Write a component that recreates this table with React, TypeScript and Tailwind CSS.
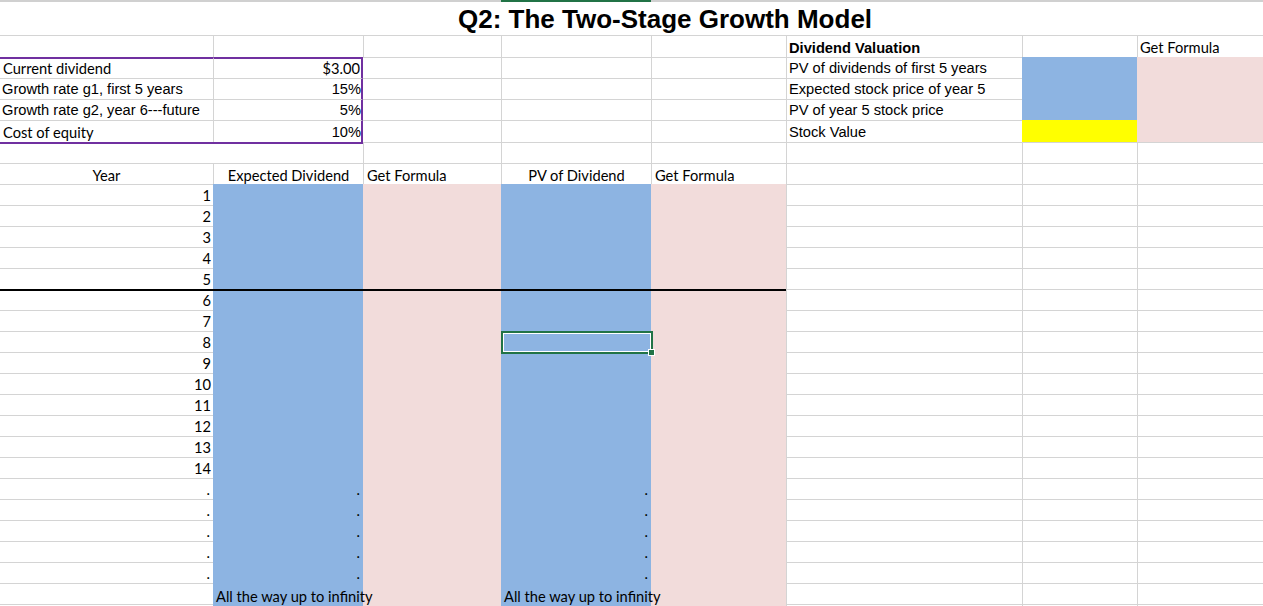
import React from "react";

const AR = "[font-family:'Liberation_Sans',Arial,sans-serif] text-[14.67px]";
const CA = "[font-family:Lato,'Open_Sans',sans-serif] text-[14.67px]";
const G = "border-l border-t border-[#d4d4d4]";
const GA = "border-t border-[#d4d4d4]";
const BLUE = "bg-[#8db4e2] border-l border-t border-[#8db4e2]";
const PINK = "bg-[#f2dcdb] border-l border-t border-[#f2dcdb]";

const WA = "w-[213px]";
const WB = "w-[150px]";
const WC = "w-[138px]";
const WD = "w-[150px]";
const WE = "w-[135px]";
const WF = "w-[236px]";
const WG = "w-[115px]";
const WH = "w-[126px]";

function Cell({
  w,
  c = "",
  children,
}: {
  w: string;
  c?: string;
  children?: React.ReactNode;
}) {
  return <div className={`${w} shrink-0 h-full flex items-end ${c}`}>{children}</div>;
}

function T({ f, c = "", children }: { f: string; c?: string; children: React.ReactNode }) {
  return (
    <span className={`${f} leading-[17px] whitespace-nowrap text-black ${c}`}>{children}</span>
  );
}

function Row({ h, children }: { h: string; children: React.ReactNode }) {
  return <div className={`flex ${h}`}>{children}</div>;
}

function RightCols() {
  return (
    <>
      <Cell w={WF} c={G} />
      <Cell w={WG} c={G} />
      <Cell w={WH} c={G} />
    </>
  );
}

export default function App() {
  const years = [1, 2, 3, 4, 5, 6, 7, 8, 9, 10, 11, 12, 13, 14];
  return (
    <div className="w-[1263px] h-[606px] overflow-hidden bg-white select-none">
      {/* column header remnant */}
      <div className="flex h-[2px]">
        <div className="w-[501px] bg-[#d0d0d0]" />
        <div className="w-[150px] bg-[#217346]" />
        <div className="w-[612px] bg-[#d0d0d0]" />
      </div>

      {/* title row */}
      <div className="h-[33px] pl-[458px] pt-[2px]">
        <span className="[font-family:'Liberation_Sans',Arial,sans-serif] text-[26px] font-bold leading-[30px] text-black whitespace-nowrap">
          Q2: The Two-Stage Growth Model
        </span>
      </div>

      {/* R2 */}
      <Row h="h-[22px]">
        <Cell w={WA} c={GA} />
        <Cell w={WB} c={G} />
        <Cell w={WC} c={G} />
        <Cell w={WD} c={G} />
        <Cell w={WE} c={G} />
        <Cell w={WF} c={G}>
          <T f={`${AR} font-bold`} c="pl-[2px] pb-[0px]">Dividend Valuation</T>
        </Cell>
        <Cell w={WG} c={G} />
        <Cell w={WH} c={G}>
          <T f={CA} c="pl-[2px] pb-[1px]">Get Formula</T>
        </Cell>
      </Row>

      {/* R3 */}
      <Row h="h-[21px]">
        <Cell w={WA} c="border-t-2 border-[#7030a0]">
          <T f={CA} c="pl-[3px] pb-[1px]">Current dividend</T>
        </Cell>
        <Cell w={WB} c="border-l border-[#d4d4d4] border-t-2 border-t-[#7030a0] border-r-2 border-r-[#7030a0] justify-end">
          <T f={CA} c="pr-[1px] pb-[1px]">$3.00</T>
        </Cell>
        <Cell w={WC} c="border-t border-[#d4d4d4]" />
        <Cell w={WD} c={G} />
        <Cell w={WE} c={G} />
        <Cell w={WF} c={G}>
          <T f={AR} c="pl-[2px] pb-[1px]">PV of dividends of first 5 years</T>
        </Cell>
        <Cell w={WG} c={BLUE} />
        <Cell w={WH} c={PINK} />
      </Row>

      {/* R4 */}
      <Row h="h-[21px]">
        <Cell w={WA} c={GA}>
          <T f={AR} c="pl-[2px] pb-[1px]">Growth rate g1, first 5 years</T>
        </Cell>
        <Cell w={WB} c="border-l border-t border-[#d4d4d4] border-r-2 border-r-[#7030a0] justify-end">
          <T f={AR} c="pb-[1px]">15%</T>
        </Cell>
        <Cell w={WC} c="border-t border-[#d4d4d4]" />
        <Cell w={WD} c={G} />
        <Cell w={WE} c={G} />
        <Cell w={WF} c={G}>
          <T f={AR} c="pl-[2px] pb-[1px]">Expected stock price of year 5</T>
        </Cell>
        <Cell w={WG} c={BLUE} />
        <Cell w={WH} c={PINK} />
      </Row>

      {/* R5 */}
      <Row h="h-[21px]">
        <Cell w={WA} c={GA}>
          <T f={AR} c="pl-[2px] pb-[1px]">Growth rate g2, year 6---future</T>
        </Cell>
        <Cell w={WB} c="border-l border-t border-[#d4d4d4] border-r-2 border-r-[#7030a0] justify-end">
          <T f={AR} c="pb-[1px]">5%</T>
        </Cell>
        <Cell w={WC} c="border-t border-[#d4d4d4]" />
        <Cell w={WD} c={G} />
        <Cell w={WE} c={G} />
        <Cell w={WF} c={G}>
          <T f={AR} c="pl-[2px] pb-[1px]">PV of year 5 stock price</T>
        </Cell>
        <Cell w={WG} c={BLUE} />
        <Cell w={WH} c={PINK} />
      </Row>

      {/* R6 */}
      <Row h="h-[22px]">
        <Cell w={WA} c={GA}>
          <T f={CA} c="pl-[3px] pb-[1px]">Cost of equity</T>
        </Cell>
        <Cell w={WB} c="border-l border-t border-[#d4d4d4] border-r-2 border-r-[#7030a0] justify-end">
          <T f={AR} c="pb-[1px]">10%</T>
        </Cell>
        <Cell w={WC} c="border-t border-[#d4d4d4]" />
        <Cell w={WD} c={G} />
        <Cell w={WE} c={G} />
        <Cell w={WF} c={G}>
          <T f={AR} c="pl-[2px] pb-[1px]">Stock Value</T>
        </Cell>
        <Cell w={WG} c="bg-[#ffff00] border-l border-t border-[#ffff00]" />
        <Cell w={WH} c={PINK} />
      </Row>

      {/* R7 */}
      <Row h="h-[21px]">
        <Cell w={WA} c="border-t-2 border-[#7030a0]" />
        <Cell w={WB} c="border-t-2 border-[#7030a0]" />
        <Cell w={WC} c={G} />
        <Cell w={WD} c={G} />
        <Cell w={WE} c={G} />
        <RightCols />
      </Row>

      {/* R8 header */}
      <Row h="h-[21px]">
        <Cell w={WA} c={`${GA} justify-center`}>
          <T f={CA}>Year</T>
        </Cell>
        <Cell w={WB} c={`${G} justify-center`}>
          <T f={CA}>Expected Dividend</T>
        </Cell>
        <Cell w={WC} c={G}>
          <T f={CA} c="pl-[3px]">Get Formula</T>
        </Cell>
        <Cell w={WD} c={`${G} justify-center`}>
          <T f={CA}>PV of Dividend</T>
        </Cell>
        <Cell w={WE} c={G}>
          <T f={CA} c="pl-[3px]">Get Formula</T>
        </Cell>
        <RightCols />
      </Row>

      {years.map((y) => {
        const black = y === 6;
        const aCls = black ? "border-t-2 border-black" : GA;
        const bCls = black ? "bg-[#8db4e2] border-t-2 border-black" : BLUE;
        const cCls = black ? "bg-[#f2dcdb] border-t-2 border-black" : PINK;
        return (
          <Row key={y} h="h-[21px]">
            <Cell w={WA} c={`${aCls} justify-end`}>
              <T f={CA} c="pr-[2px] pb-[1px]">{y}</T>
            </Cell>
            <Cell w={WB} c={bCls} />
            <Cell w={WC} c={cCls} />
            <Cell w={WD} c={`${bCls} relative`}>
              {y === 8 && (
                <div className="absolute left-[-1px] top-[-1px] w-[152px] h-[23px] border-2 border-[#217346] z-10">
                  <div className="w-full h-full border border-white" />
                  <div className="absolute left-[145px] top-[16px] w-[7px] h-[7px] bg-[#217346] border border-white" />
                </div>
              )}
            </Cell>
            <Cell w={WE} c={cCls} />
            <RightCols />
          </Row>
        );
      })}

      {[0, 1, 2, 3, 4].map((i) => (
        <Row key={`d${i}`} h="h-[21px]">
          <Cell w={WA} c={`${GA} justify-end`}>
            <T f={CA} c="pr-[3px] pb-[1px]">.</T>
          </Cell>
          <Cell w={WB} c={`${BLUE} justify-end`}>
            <T f={CA} c="pr-[3px] pb-[1px]">.</T>
          </Cell>
          <Cell w={WC} c={PINK} />
          <Cell w={WD} c={`${BLUE} justify-end`}>
            <T f={CA} c="pr-[3px] pb-[1px]">.</T>
          </Cell>
          <Cell w={WE} c={PINK} />
          <RightCols />
        </Row>
      ))}

      {/* last row */}
      <Row h="h-[21px]">
        <Cell w={WA} c={GA} />
        <Cell w={WB} c={BLUE}>
          <T f={CA} c="pl-[2px] mb-[-1px] relative z-10">All the way up to infinity</T>
        </Cell>
        <Cell w={WC} c={PINK} />
        <Cell w={WD} c={BLUE}>
          <T f={CA} c="pl-[2px] mb-[-1px] relative z-10">All the way up to infinity</T>
        </Cell>
        <Cell w={WE} c={PINK} />
        <RightCols />
      </Row>
      <Row h="h-[4px]">
        <Cell w={WA} c={GA} />
        <Cell w={WB} c={BLUE} />
        <Cell w={WC} c={PINK} />
        <Cell w={WD} c={BLUE} />
        <Cell w={WE} c={PINK} />
        <RightCols />
      </Row>
    </div>
  );
}
